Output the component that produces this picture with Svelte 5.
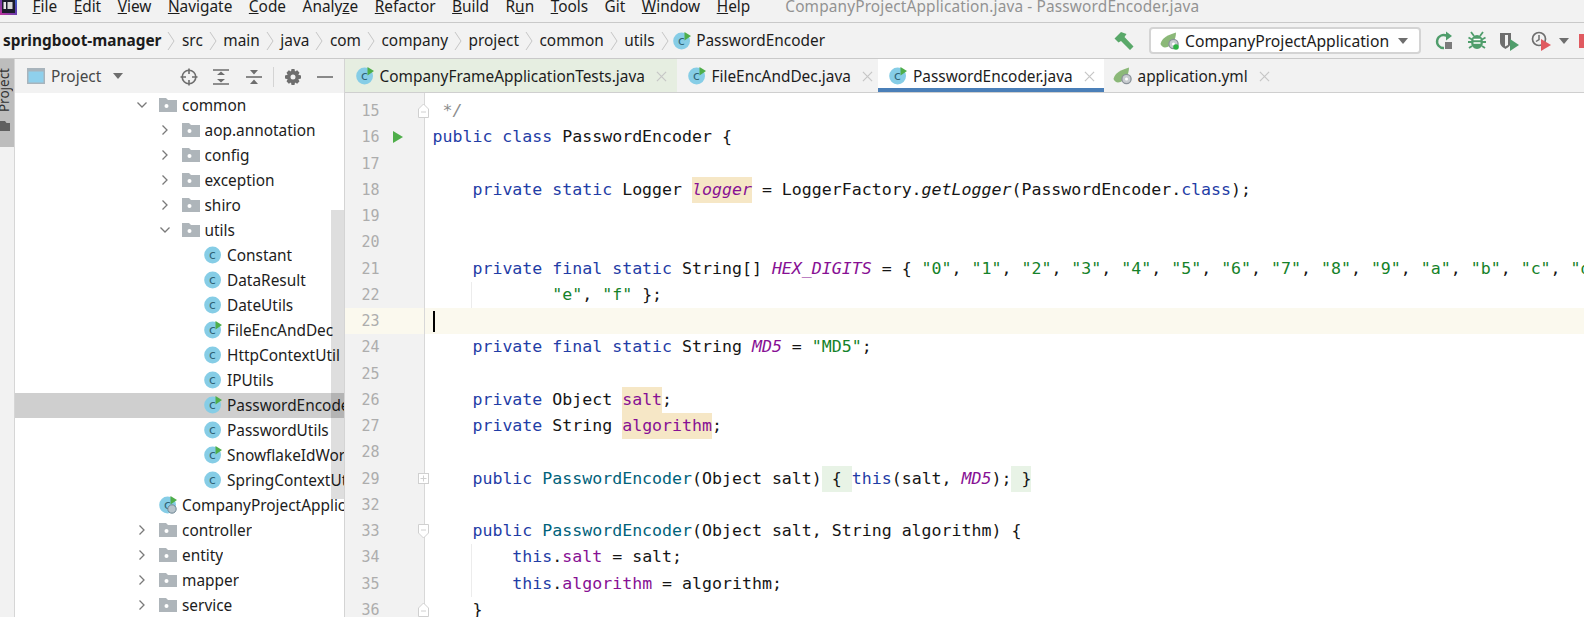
<script>
  const menu = [
    ["F", "ile"], ["E", "dit"], ["V", "iew"], ["N", "avigate"], ["C", "ode"],
    ["Analy", "ze", 1], ["R", "efactor"], ["B", "uild"], ["R", "un", 2], ["T", "ools"],
    ["", "Git"], ["W", "indow"], ["H", "elp"]
  ];
  const crumbs = ["src", "main", "java", "com", "company", "project", "common", "utils"];

  // depth, kind (open/closed folder, class, run class, app), label
  const tree = [
    [0, "open", "common"],
    [1, "closed", "aop.annotation"],
    [1, "closed", "config"],
    [1, "closed", "exception"],
    [1, "closed", "shiro"],
    [1, "open", "utils"],
    [2, "class", "Constant"],
    [2, "class", "DataResult"],
    [2, "class", "DateUtils"],
    [2, "run", "FileEncAndDec"],
    [2, "class", "HttpContextUtil"],
    [2, "class", "IPUtils"],
    [2, "run", "PasswordEncoder", true],
    [2, "class", "PasswordUtils"],
    [2, "run", "SnowflakeIdWorker"],
    [2, "class", "SpringContextUtil"],
    [0, "app", "CompanyProjectApplication"],
    [0, "closed", "controller"],
    [0, "closed", "entity"],
    [0, "closed", "mapper"],
    [0, "closed", "service"]
  ];

  const tabs = [
    { name: "CompanyFrameApplicationTests.java", kind: "run", cls: "green" },
    { name: "FileEncAndDec.java", kind: "run" },
    { name: "PasswordEncoder.java", kind: "run", cls: "active" },
    { name: "application.yml", kind: "yml" }
  ];

  const digits = ["0", "1", "2", "3", "4", "5", "6", "7", "8", "9", "a", "b", "c", "d"];
  const hex = digits.flatMap((d, i) => [["s", `"${d}"`], i < digits.length - 1 ? ", " : ","]);

  const code = [
    { n: 15, fold: "end", t: [["c", " */"]] },
    { n: 16, run: true, t: [["k", "public class"], " PasswordEncoder {"] },
    { n: 17, t: [] },
    { n: 18, t: ["    ", ["k", "private static"], " Logger ", ["fi hl", "logger"], " = LoggerFactory.", ["i", "getLogger"], "(PasswordEncoder.", ["k", "class"], ");"] },
    { n: 19, t: [] },
    { n: 20, t: [] },
    { n: 21, t: ["    ", ["k", "private final static"], " String[] ", ["fi", "HEX_DIGITS"], " = { ", ...hex] },
    { n: 22, guide: true, t: ["            ", ["s", '"e"'], ", ", ["s", '"f"'], " };"] },
    { n: 23, caret: true, t: [] },
    { n: 24, t: ["    ", ["k", "private final static"], " String ", ["fi", "MD5"], " = ", ["s", '"MD5"'], ";"] },
    { n: 25, t: [] },
    { n: 26, t: ["    ", ["k", "private"], " Object ", ["f hl", "salt"], ";"] },
    { n: 27, t: ["    ", ["k", "private"], " String ", ["f hl", "algorithm"], ";"] },
    { n: 28, t: [] },
    { n: 29, fold: "plus", t: ["    ", ["k", "public"], " ", ["m", "PasswordEncoder"], "(Object salt)", ["br", " { "], ["k", "this"], "(salt, ", ["fi", "MD5"], ");", ["br", " }"]] },
    { n: 32, t: [] },
    { n: 33, fold: "start", t: ["    ", ["k", "public"], " ", ["m", "PasswordEncoder"], "(Object salt, String algorithm) {"] },
    { n: 34, guide: true, t: ["        ", ["k", "this"], ".", ["f", "salt"], " = salt;"] },
    { n: 35, guide: true, t: ["        ", ["k", "this"], ".", ["f", "algorithm"], " = algorithm;"] },
    { n: 36, fold: "end", t: ["    }"] }
  ];
</script>

{#snippet classIcon(kind)}
  <svg class="ico" viewBox="0 0 18 18">
    <circle cx="8.6" cy="9" r="8.4" fill="#86cde6" />
    <text x="8.4" y="12.8" text-anchor="middle" class="c-letter">c</text>
    {#if kind === "run" || kind === "app"}
      <path d="M11.5 0 L18 4 L11.5 8.500 Z" fill="#4fae4a" />
    {/if}
    {#if kind === "app"}
      <circle cx="13" cy="13" r="4.2" fill="#b7c4cc" stroke="#6f8794" stroke-width="1" />
    {/if}
  </svg>
{/snippet}

{#snippet folder()}
  <svg class="ico" viewBox="0 0 18 18">
    <path d="M0 2 H7 L9 4 H18 V16 H0 Z" fill="#aeb5ba" />
    <circle cx="7.5" cy="10" r="2" fill="#fff" />
  </svg>
{/snippet}

{#snippet spring(dot)}
  <svg class="leaf" viewBox="0 0 20 18">
    <path d="M0.500 12 C2 5.500 8 3 16 0.500 C16 8 12 14.500 5 15.500 C3 15.500 1.500 14 0.500 12 Z" fill="#8bb878" />
    <circle cx="13.500" cy="12" r="4.600" fill="#c8ccd0" stroke="#8a9299" stroke-width="1.300" />
    <circle cx="13.500" cy="12" r="1.500" fill="#fff" />
    {#if dot}<circle cx="16" cy="15" r="2.800" fill="#2fb344" />{/if}
  </svg>
{/snippet}

<div class="app">
  <header class="menu">
    <svg class="logo" viewBox="0 0 17 15">
      <defs>
        <linearGradient id="logo-rim" x1="0" y1="1" x2="1" y2="0">
          <stop offset="0" stop-color="#c2349b" />
          <stop offset="0.6" stop-color="#5a3fb0" />
          <stop offset="1" stop-color="#2f6fd0" />
        </linearGradient>
      </defs>
      <rect x="0" y="-3" width="17" height="18" fill="url(#logo-rim)" />
      <rect x="2" y="-3" width="13" height="16" fill="#1c1c2c" />
      <rect x="3.500" y="2" width="2.500" height="7" fill="#e8e8e8" />
      <rect x="7.500" y="2" width="5" height="7" fill="#d8d8d8" />
    </svg>
    <nav class="items">
      {#each menu as [a, b, mode]}
        <span class="item">
          {#if mode === 1}{a}<u>z</u>e
          {:else if mode === 2}{a}<u>u</u>n
          {:else if a}<u>{a}</u>{b}
          {:else}{b}{/if}
        </span>
      {/each}
    </nav>
    <span class="title">CompanyProjectApplication.java - PasswordEncoder.java</span>
  </header>

  <div class="nav">
    <b class="root">springboot-manager</b>
    {#each crumbs as c}
      <svg class="sep" viewBox="0 0 8 20"><path d="M1 1 L7 10 L1 19" /></svg>
      <span class="crumb">{c}</span>
    {/each}
    <svg class="sep" viewBox="0 0 8 20"><path d="M1 1 L7 10 L1 19" /></svg>
    <span class="crumb-icon">{@render classIcon("run")}</span>
    <span class="crumb">PasswordEncoder</span>

    <div class="tools">
      <svg class="hammer" viewBox="0 0 20 20">
        <path d="M0.500 7.500 L7 1 L12.500 3 L10.500 6 L19.500 15.500 L16 19 L7 10 L4.500 11.500 Z" fill="#59a869" />
      </svg>
      <div class="combo">
        {@render spring(true)}
        <span>CompanyProjectApplication</span>
        <svg class="drop" viewBox="0 0 12 8"><path d="M1 1 H11 L6 7 Z" /></svg>
      </div>
      <svg class="tool" viewBox="0 0 20 20">
        <path d="M9 17 A6.500 6.500 0 1 1 12 5" fill="none" stroke="#4f9d6b" stroke-width="2.400" />
        <path d="M11 0.500 L17 5 L11 9.500 Z" fill="#4f9d6b" />
        <rect x="10" y="11" width="7" height="7" fill="#7b7b7b" />
      </svg>
      <svg class="tool" viewBox="0 0 20 20">
        <ellipse cx="10" cy="11" rx="6" ry="7" fill="#4f9d6b" />
        <path d="M4 1 L7 5 M16 1 L13 5 M1 11 H19 M1.500 6.500 L5 8.500 M18.500 6.500 L15 8.500 M2 17 L5 15 M18 17 L15 15" stroke="#4f9d6b" stroke-width="1.800" />
        <path d="M6.500 8.500 H13.500 M6.500 12 H13.500" stroke="#fff" stroke-width="1.300" />
      </svg>
      <svg class="tool" viewBox="0 0 20 20">
        <path d="M1 2 H12 V11 C12 15 8 17 6.500 18 C5 17 1 15 1 11 Z" fill="#6e6e6e" />
        <path d="M6 4 H9 V14 L6 15.500 Z" fill="#f2f2f2" />
        <path d="M11 8 L20 14 L11 20 Z" fill="#4f9d6b" />
      </svg>
      <svg class="tool" viewBox="0 0 20 20">
        <circle cx="8" cy="8" r="6.500" fill="none" stroke="#6e6e6e" stroke-width="1.700" />
        <path d="M8 4 V8.500 L5 10.500" fill="none" stroke="#6e6e6e" stroke-width="1.500" />
        <path d="M10 8 L20 14 L10 20 Z" fill="#e05a60" />
      </svg>
      <svg class="drop small" viewBox="0 0 12 8"><path d="M1 1 H11 L6 7 Z" /></svg>
      <div class="stop"></div>
    </div>
  </div>

  <div class="body">
    <aside class="strip">
      <div class="strip-btn">
        <span class="strip-label">Project</span>
        <svg class="strip-folder" viewBox="0 0 10 10"><path d="M0 0 H5 L6.500 2 H10 V10 H0 Z" fill="#5f5f5f" /></svg>
      </div>
    </aside>

    <section class="panel">
      <div class="panel-head">
        <svg class="proj" viewBox="0 0 18 16">
          <rect width="18" height="16" fill="#a8b4bc" />
          <rect x="1.500" y="3.500" width="15" height="11" fill="#8fd0ec" />
        </svg>
        <span class="proj-name">Project</span>
        <svg class="drop" viewBox="0 0 12 8"><path d="M1 1 H11 L6 7 Z" /></svg>
        <div class="head-icons">
          <svg viewBox="0 0 18 18"><circle cx="9" cy="9" r="6.800" /><path d="M9 0.500 V6 M9 12 V17.500 M0.500 9 H6 M12 9 H17.500" /></svg>
          <svg viewBox="0 0 18 18"><path d="M1 2 H17 M1 16 H17" stroke-width="2" /><path d="M5 7 L9 3.500 L13 7 Z M5 11 L9 14.500 L13 11 Z" class="solid" /></svg>
          <svg viewBox="0 0 18 18"><path d="M1 9 H17" stroke-width="2" /><path d="M5 2 L9 6.500 L13 2 Z M5 16 L9 11.500 L13 16 Z" class="solid" /></svg>
          <i class="divider"></i>
          <svg viewBox="0 0 18 18">
            <path class="solid" fill-rule="evenodd" d="M7.500 1 H10.500 L11 3.500 L13.200 2.300 L15.500 4.700 L14.300 6.800 L17 7.500 V10.500 L14.300 11.200 L15.500 13.300 L13.200 15.700 L11 14.500 L10.500 17 H7.500 L7 14.500 L4.800 15.700 L2.500 13.300 L3.700 11.200 L1 10.500 V7.500 L3.700 6.800 L2.500 4.700 L4.800 2.300 L7 3.500 Z M9 6.500 A2.500 2.500 0 1 0 9 11.500 A2.500 2.500 0 1 0 9 6.500 Z" />
          </svg>
          <svg viewBox="0 0 18 18"><path d="M1 9 H17" stroke-width="2" /></svg>
        </div>
      </div>

      <ul class="tree">
        {#each tree as [depth, kind, label, selected]}
          <li class="row" class:selected style="padding-left: {120 + depth * 22.5}px">
            <span class="arrow">
              {#if kind === "open"}
                <svg viewBox="0 0 12 12"><path d="M1.500 3.500 L6 8 L10.500 3.500" /></svg>
              {:else if kind === "closed"}
                <svg viewBox="0 0 12 12"><path d="M3.500 1.500 L8 6 L3.500 10.500" /></svg>
              {/if}
            </span>
            {#if kind === "open" || kind === "closed"}
              {@render folder()}
            {:else}
              {@render classIcon(kind)}
            {/if}
            <span class="label">{label}</span>
          </li>
        {/each}
      </ul>
      <div class="thumb"></div>
    </section>

    <main class="editor">
      <div class="tabs">
        {#each tabs as tab}
          <div class="tab {tab.cls ?? ''}">
            {#if tab.kind === "yml"}{@render spring(false)}{:else}{@render classIcon(tab.kind)}{/if}
            <span class="tab-name">{tab.name}</span>
            <svg class="close" viewBox="0 0 12 12"><path d="M1 1 L11 11 M11 1 L1 11" /></svg>
          </div>
        {/each}
      </div>

      <div class="lines">
        {#each code as line}
          <div class="line" class:current={line.caret}>
            <div class="gutter">
              <span class="num">{line.n}</span>
              {#if line.run}
                <svg class="run" viewBox="0 0 10 12"><path d="M0 0 L10 6 L0 12 Z" /></svg>
              {/if}
              {#if line.fold}
                <svg class="fold" viewBox="0 0 12 16">
                  {#if line.fold === "plus"}
                    <rect x="0.500" y="2.500" width="10" height="10" />
                    <path d="M2.500 7.500 H8.500 M5.500 4.500 V10.500" />
                  {:else if line.fold === "start"}
                    <path d="M0.500 1.500 H10.500 V10 L5.500 15 L0.500 10 Z" />
                    <path d="M3 7 H8" />
                  {:else}
                    <path d="M0.500 14.500 H10.500 V6 L5.500 1 L0.500 6 Z" />
                    <path d="M3 9 H8" />
                  {/if}
                </svg>
              {/if}
            </div>
            <!-- kept on one line: .text is white-space: pre -->
            <div class="text">{#if line.guide}<i class="guide"></i>{/if}{#if line.caret}<i class="caret"></i>{/if}{#each line.t as tok}{#if typeof tok === "string"}{tok}{:else}<span class={tok[0]}>{tok[1]}</span>{/if}{/each}</div>
          </div>
        {/each}
      </div>
    </main>
  </div>
</div>

<style>
  :global(body) {
    margin: 0;
  }
  .app {
    width: 1584px;
    height: 617px;
    overflow: hidden;
    display: flex;
    flex-direction: column;
    background: #f2f2f2;
    color: #1c1c1c;
    font-family: "Noto Sans", "Open Sans", sans-serif;
    font-size: 15.4px;
  }
  .ico {
    width: 18px;
    height: 18px;
    flex: none;
  }
  .leaf {
    width: 20px;
    height: 18px;
    flex: none;
    margin: 0 -1px 0 -2px;
  }
  .c-letter {
    font-family: "DejaVu Sans", sans-serif;
    font-size: 12.500px;
    fill: #2f6376;
  }

  .menu {
    height: 22px;
    flex: none;
    display: flex;
    align-items: flex-start;
    border-bottom: 1px solid #c9c9c9;
    overflow: hidden;
  }
  .logo {
    width: 17px;
    height: 15px;
    flex: none;
  }
  .items {
    display: flex;
    gap: 16.500px;
    margin-left: 15.500px;
    line-height: 13px;
  }
  .item u {
    text-underline-offset: 1px;
    text-decoration-thickness: 1px;
  }
  .title {
    margin-left: 35px;
    line-height: 13px;
    color: #929292;
    letter-spacing: 0.15px;
  }

  .nav {
    height: 35px;
    flex: none;
    display: flex;
    align-items: center;
    border-bottom: 1px solid #c9c9c9;
    padding-left: 3px;
  }
  .root {
    font-weight: 700;
  }
  .sep {
    width: 8px;
    height: 20px;
    flex: none;
    margin: 0 6.500px 0 6px;
  }
  .sep path {
    fill: none;
    stroke: #c6c6c6;
    stroke-width: 1;
  }
  .crumb-icon {
    display: flex;
    margin: 0 5px 0 -2px;
  }
  .tools {
    margin-left: auto;
    margin-right: -3px;
    display: flex;
    align-items: center;
  }
  .hammer {
    width: 20px;
    height: 20px;
    margin-right: 15px;
  }
  .combo {
    width: 272px;
    height: 27px;
    box-sizing: border-box;
    display: flex;
    align-items: center;
    gap: 6px;
    padding-left: 11px;
    background: #fff;
    border: 2px solid #d4d4d4;
    border-radius: 4px;
    margin-right: 14px;
    font-size: 15.700px;
  }
  .drop {
    width: 12px;
    height: 8px;
    flex: none;
    margin-left: 11px;
  }
  .drop path {
    fill: #6e6e6e;
  }
  .combo .drop {
    margin-left: auto;
    margin-right: 10px;
  }
  .tool {
    width: 20px;
    height: 20px;
    flex: none;
    margin-right: 12px;
  }
  .drop.small {
    margin-left: -5px;
    margin-right: 9px;
  }
  .stop {
    width: 8px;
    height: 14px;
    flex: none;
    background: #e05a60;
  }

  .body {
    flex: 1;
    display: flex;
    min-height: 0;
  }
  .strip {
    width: 15px;
    flex: none;
    box-sizing: border-box;
    border-right: 1px solid #d6d6d6;
    overflow: hidden;
  }
  .strip-btn {
    height: 88px;
    background: #bdbdbd;
    position: relative;
  }
  .strip-label {
    position: absolute;
    left: -6px;
    top: 9px;
    writing-mode: vertical-rl;
    transform: rotate(180deg);
    font-size: 13.500px;
    line-height: 20px;
    color: #333;
  }
  .strip-folder {
    position: absolute;
    left: 0;
    top: 62px;
    width: 10px;
    height: 10px;
  }

  .panel {
    width: 328.500px;
    flex: none;
    display: flex;
    flex-direction: column;
    position: relative;
    overflow: hidden;
  }
  .panel-head {
    height: 33.500px;
    flex: none;
    box-sizing: border-box;
    display: flex;
    align-items: center;
    padding: 1px 0 0 12px;
    color: #474747;
  }
  .proj {
    width: 18px;
    height: 16px;
    margin-right: 6px;
  }
  .head-icons {
    display: flex;
    align-items: center;
    position: absolute;
    left: 165px;
    top: 8px;
    gap: 14.300px;
  }
  .head-icons svg {
    width: 18px;
    height: 18px;
  }
  .head-icons path,
  .head-icons circle {
    fill: none;
    stroke: #6e6e6e;
    stroke-width: 1.600;
  }
  .head-icons .solid {
    fill: #6e6e6e;
    stroke: none;
  }
  .divider {
    width: 1px;
    height: 20px;
    margin: 0 -4px;
    background: #d4d4d4;
  }
  .tree {
    flex: 1;
    margin: 0;
    padding: 0;
    list-style: none;
    background: #fff;
  }
  .row {
    height: 25px;
    display: flex;
    align-items: center;
    white-space: nowrap;
  }
  .row.selected {
    background: #cfcfcf;
  }
  .arrow {
    width: 24px;
    flex: none;
    display: flex;
    padding-left: 1px;
    box-sizing: border-box;
  }
  .arrow svg {
    width: 12px;
    height: 12px;
  }
  .arrow path {
    fill: none;
    stroke: #7a7a7a;
    stroke-width: 1.300;
  }
  .label {
    margin-left: 5px;
    min-width: 0;
    overflow: hidden;
  }
  .thumb {
    position: absolute;
    right: 0;
    top: 150.500px;
    width: 13px;
    height: 289px;
    background: rgba(0, 0, 0, 0.13);
  }

  .editor {
    flex: 1;
    min-width: 0;
    display: flex;
    flex-direction: column;
    border-left: 1px solid #d4d4d4;
    overflow: hidden;
  }
  .tabs {
    height: 34px;
    flex: none;
    box-sizing: border-box;
    display: grid;
    grid-template-columns: 332px 201.500px 225.500px 170px;
    border-bottom: 1px solid #cfcfcf;
  }
  .tab {
    display: flex;
    align-items: center;
    gap: 6px;
    padding: 1px 0 0 11px;
    white-space: nowrap;
  }
  .tab.green {
    background: #e6eee1;
  }
  .tab.active {
    background: #fff;
    box-shadow: inset 0 -4px 0 #4a7fb8;
  }
  .tab-name {
    flex: none;
  }
  .close {
    width: 11px;
    height: 11px;
    flex: none;
    margin-left: 5px;
  }
  .close path {
    fill: none;
    stroke: #c6c6c6;
    stroke-width: 1.300;
  }

  .lines {
    flex: 1;
    min-height: 0;
    padding-top: 5px;
    background: linear-gradient(90deg, #f2f2f2 79px, #d8d8d8 79px, #d8d8d8 80px, #fff 80px);
    font-family: "DejaVu Sans Mono", "Liberation Mono", monospace;
    font-size: 16.580px;
    color: #151515;
  }
  .line {
    height: 26.260px;
    line-height: 26.260px;
    display: flex;
  }
  .line.current {
    background: #fbf9ee;
  }
  .gutter {
    width: 80px;
    flex: none;
    display: flex;
    align-items: center;
    position: relative;
    padding-left: 17px;
    box-sizing: border-box;
    border-right: 1px solid #d8d8d8;
  }
  .num {
    font-size: 15px;
    color: #adadad;
    width: 31px;
    flex: none;
  }
  .run {
    width: 10px;
    height: 12px;
  }
  .run path {
    fill: #4fae4a;
  }
  .fold {
    position: absolute;
    right: -6.500px;
    top: 5px;
    width: 12px;
    height: 16px;
  }
  .fold path,
  .fold rect {
    fill: #fff;
    stroke: #d0d0d0;
    stroke-width: 1;
  }
  .text {
    position: relative;
    padding-left: 8px;
    white-space: pre;
  }
  .guide {
    position: absolute;
    left: 46px;
    top: 0;
    bottom: 0;
    width: 1px;
    background: #ececec;
  }
  .caret {
    position: absolute;
    left: 8px;
    top: 3px;
    width: 2px;
    height: 21px;
    background: #000;
  }
  .k {
    color: #1f3da6;
  }
  .s {
    color: #15822a;
  }
  .f {
    color: #871094;
  }
  .fi {
    color: #871094;
    font-style: italic;
  }
  .i {
    font-style: italic;
  }
  .m {
    color: #00627a;
  }
  .c {
    color: #8c8c8c;
    font-style: italic;
  }
  .hl {
    background: #f6e7c6;
    display: inline-block;
  }
  .br {
    background: #e8f3e6;
    display: inline-block;
  }
</style>
